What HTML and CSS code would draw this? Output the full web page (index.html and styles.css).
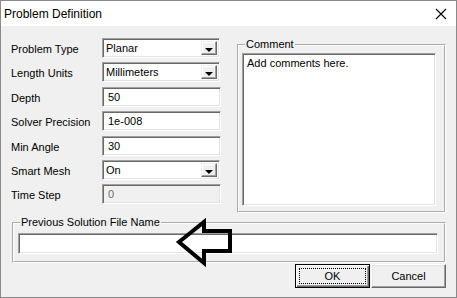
FILE: index.html
```html
<!DOCTYPE html>
<html>
<head>
    <link rel="stylesheet" href="styles.css">
</head>
<body>
    <div id="dialog">
        <div class="titlebar">
            <span class="title">Problem Definition</span>
            <svg class="close" width="12" height="12" viewBox="0 0 12 12">
                <path d="M1 1 L11 11 M11 1 L1 11" stroke="#000" stroke-width="1.1" fill="none"/>
            </svg>
        </div>
        <div class="client">
            <div class="top">
                <div class="form">
                    <span class="label">Problem Type</span>
                    <div class="field combo"><span class="value">Planar</span><span class="drop"></span></div>
                    <span class="label">Length Units</span>
                    <div class="field combo"><span class="value">Millimeters</span><span class="drop"></span></div>
                    <span class="label">Depth</span>
                    <div class="field text">50</div>
                    <span class="label">Solver Precision</span>
                    <div class="field text">1e-008</div>
                    <span class="label">Min Angle</span>
                    <div class="field text">30</div>
                    <span class="label">Smart Mesh</span>
                    <div class="field combo"><span class="value">On</span><span class="drop"></span></div>
                    <span class="label">Time Step</span>
                    <div class="field text disabled">0</div>
                </div>
                <fieldset class="group comment-group">
                    <legend>Comment</legend>
                    <div class="field memo">Add comments here.</div>
                </fieldset>
            </div>
            <fieldset class="group file-group">
                <legend>Previous Solution File Name</legend>
                <div class="field file"></div>
            </fieldset>
            <div class="buttons">
                <button class="btn default"><span class="focus">OK</span></button>
                <button class="btn">Cancel</button>
            </div>
        </div>
        <!-- flecha desenhada por cima do dialogo -->
        <svg class="arrow" width="70" height="60" viewBox="0 0 70 60">
            <polygon points="7,27 32,7 32,16 58,16 58,36 32,36 32,48" fill="none" stroke="#000" stroke-width="4" stroke-linejoin="miter"/>
        </svg>
    </div>
</body>
</html>
```

FILE: styles.css
```css
/* Janela do dialogo */
body {
    margin: 0;
    font-family: "Liberation Sans", Arial, sans-serif;
    font-size: 11px;
    color: #000;
}

#dialog {
    position: relative;
    width: 457px;
    height: 298px;
    box-sizing: border-box;
    border: 1px solid #8a8a8a;
    background-color: #f0f0f0;
}

.titlebar {
    height: 25px;
    background-color: #fff;
    display: flex;
    align-items: center;
    justify-content: space-between;
}

.title {
    font-size: 12px;
    margin-left: 3px;
}

.close {
    margin-right: 9px;
}

.client {
    height: 271px;
    display: flex;
    flex-direction: column;
}

.top {
    display: flex;
    padding-top: 12px;
}

/* Formulario da esquerda */
.form {
    display: grid;
    grid-template-columns: 91px 119px;
    grid-auto-rows: 20px;
    row-gap: 4.4px;
    margin-left: 10px;
}

.label {
    display: flex;
    align-items: center;
    padding-top: 2px;
}

.field {
    box-sizing: border-box;
    background-color: #fff;
    border: 1px solid;
    border-color: #a0a0a0 #fff #fff #a0a0a0;
    box-shadow: inset 1px 1px #696969, inset -1px -1px #e3e3e3;
}

.text {
    padding: 3px 5px;
    line-height: 13px;
}

.disabled {
    background-color: #f0f0f0;
    color: #6d6d6d;
}

.combo {
    width: 118px;
    display: flex;
    padding: 2px;
}

.combo .value {
    flex: 1;
    padding-left: 1px;
    line-height: 15px;
}

.drop {
    width: 16px;
    box-sizing: border-box;
    border: 1px solid;
    border-color: #f0f0f0 #696969 #696969 #f0f0f0;
    box-shadow: inset -1px -1px #a0a0a0, inset 1px 1px #fff;
    background-color: #f0f0f0;
    position: relative;
}

.drop::after {
    content: "";
    position: absolute;
    left: 3px;
    top: 6px;
    border-left: 4px solid transparent;
    border-right: 4px solid transparent;
    border-top: 4px solid #000;
}

/* Caixas de grupo */
.group {
    margin: 0;
    padding: 0;
    border: 2px groove #fff;
    box-sizing: border-box;
}

.group legend {
    margin-left: 6px;
    padding: 0 1px;
    line-height: 13px;
}

.comment-group {
    width: 209px;
    height: 175px;
    margin-left: 16px;
}

.memo {
    width: 194px;
    height: 153px;
    margin: 2px 0 0 3px;
    padding: 3px 4px;
    line-height: 13px;
}

.file-group {
    width: 434px;
    height: 47px;
    margin: 3px 0 0 11px;
}

.file {
    width: 420px;
    height: 21px;
    margin: 4px 0 0 4px;
}

/* Botoes */
.buttons {
    display: flex;
    justify-content: flex-end;
    gap: 1px;
    margin: 1px 10px 0 0;
}

.btn {
    width: 75px;
    height: 24px;
    font-family: inherit;
    font-size: 11px;
    background-color: #f0f0f0;
    border: 1px solid;
    border-color: #fff #696969 #696969 #fff;
    box-shadow: inset -1px -1px #a0a0a0, inset 1px 1px #e3e3e3;
    padding: 0;
}

.btn.default {
    border: 1px solid #000;
    box-shadow: inset 1px 1px #fff, inset -1px -1px #696969, inset -2px -2px #a0a0a0;
    padding: 3px;
}

.focus {
    display: block;
    height: 100%;
    box-sizing: border-box;
    border: 1px dotted #000;
    line-height: 14px;
}

.arrow {
    position: absolute;
    left: 171px;
    top: 214px;
}
```
